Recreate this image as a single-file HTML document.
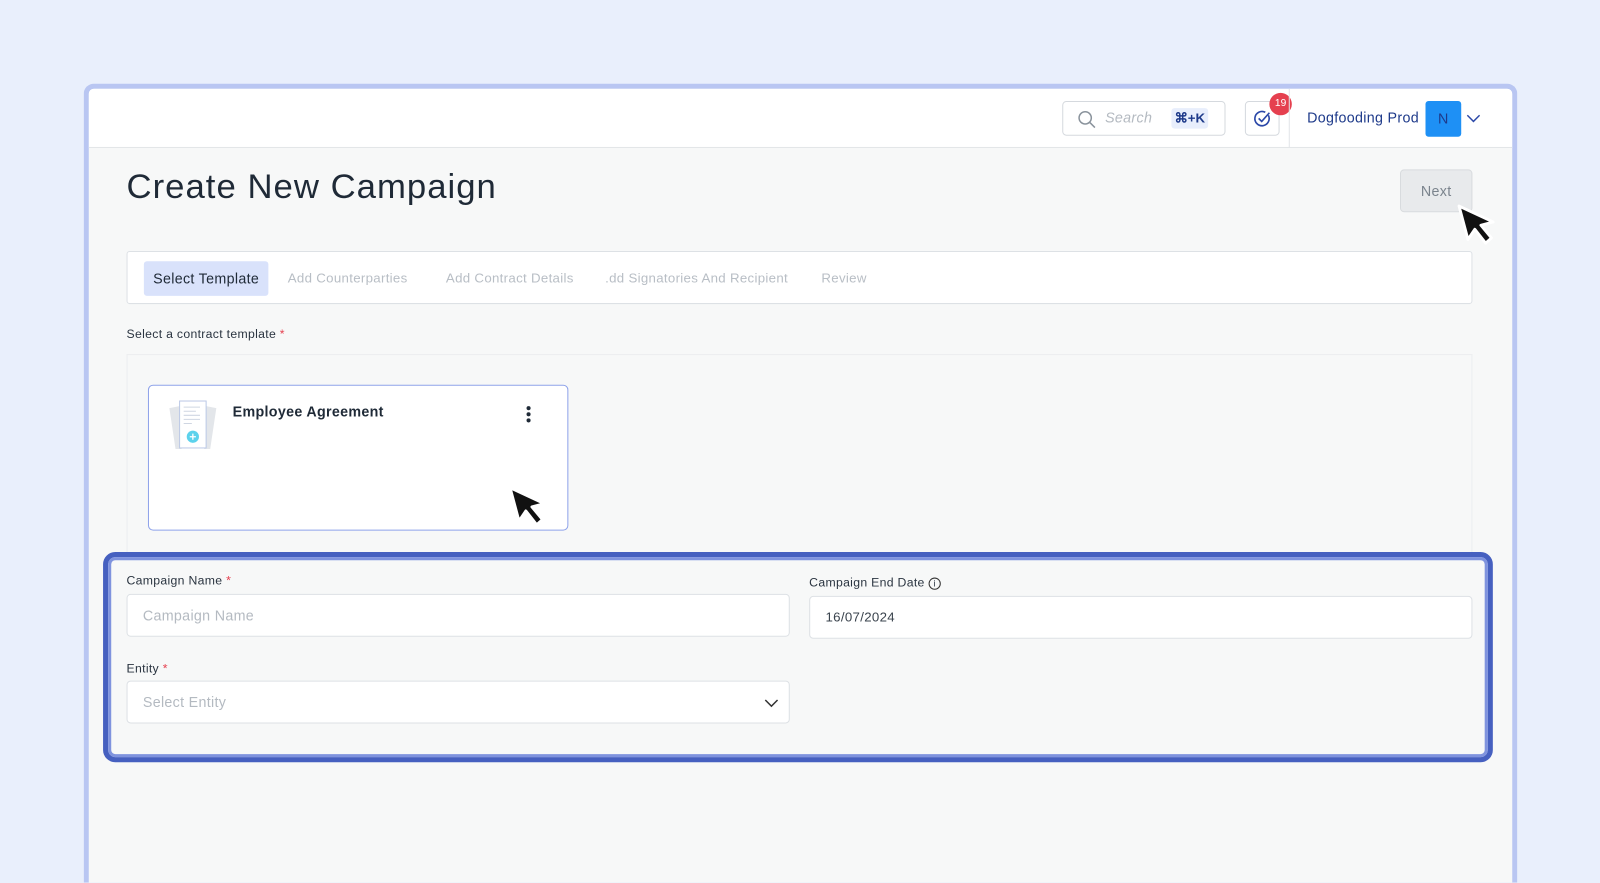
<!DOCTYPE html>
<html style="width:1600px;height:883px;overflow:hidden"><head><meta charset="utf-8"><style>
*{box-sizing:border-box;margin:0;padding:0}
body{width:1600px;height:883px;background:#e9effc;font-family:"Liberation Sans",sans-serif;position:relative;overflow:hidden;color:#1f2a37;letter-spacing:0.3px}
.wrap{position:absolute;left:0;top:0;width:1568px;height:865px;overflow:hidden;transform:scale(1.0204);transform-origin:0 0}
.win{position:absolute;left:82px;top:82px;width:1405px;height:783px;border:5px solid #b9c6f2;border-bottom:none;border-radius:10px 10px 0 0;background:#f7f8f8;overflow:hidden}
.hdr{position:absolute;left:0;top:0;right:0;height:58px;background:#fff;border-bottom:1px solid #e2e5e8}
.abs{position:absolute}
.search{left:954px;top:12px;width:160px;height:34px;border:1.5px solid #d5d9de;border-radius:4px}
.kbd{left:106px;top:6px;width:36px;height:20px;background:#e8eefc;border-radius:3px;color:#1e3a8a;font-size:13px;font-weight:bold;text-align:center;line-height:20px;letter-spacing:0}
.chk{left:1133px;top:12px;width:34px;height:34px;border:1.5px solid #d5d9de;border-radius:4px}
.badge{left:1157px;top:4px;width:22px;height:22px;border-radius:50%;background:#e5404f;color:#fff;font-size:10px;text-align:center;line-height:22px;letter-spacing:0}
.lbl{font-size:12px;color:#2a3440}
.star{color:#e5404f}
.input{background:#fff;border:1px solid #dde1e5;border-radius:4px;font-size:14px;color:#b4bac1;padding-left:15px}
</style></head><body>
<div class="wrap">
<div class="win">
 <div class="hdr">
  <div class="abs search">
   <svg class="abs" style="left:14px;top:8px" width="18" height="18" viewBox="0 0 18 18"><circle cx="7.5" cy="7.5" r="6" fill="none" stroke="#8a939c" stroke-width="1.5"/><path d="M12 12l5 5" stroke="#8a939c" stroke-width="1.5"/></svg>
   <div class="abs" style="left:41px;top:7px;font-size:14px;font-style:italic;color:#b4bac1">Search</div>
   <div class="abs kbd">⌘+K</div>
  </div>
  <div class="abs chk"><svg class="abs" style="left:7px;top:7px" width="18" height="18" viewBox="0 0 18 18"><path d="M15 6A7 7 0 1 1 12 3" fill="none" stroke="#2b48a8" stroke-width="1.6"/><path d="M5.5 9l3 3L16 3.5" fill="none" stroke="#2b48a8" stroke-width="1.6"/></svg></div>
  <div class="abs badge">19</div>
  <div class="abs" style="left:1176px;top:0;width:1px;height:58px;background:#e2e5e8"></div>
  <div class="abs" style="left:1194px;top:20px;font-size:14px;color:#1e3a8a">Dogfooding Prod</div>
  <div class="abs" style="left:1310px;top:12px;width:35px;height:35px;background:#1e90f5;border-radius:3px;color:#1e3a8a;text-align:center;line-height:35px;font-size:14px">N</div>
  <svg class="abs" style="left:1350px;top:24px" width="14" height="10" viewBox="0 0 14 10"><path d="M1 2l6 6 6-6" fill="none" stroke="#2b48a8" stroke-width="1.4"/></svg>
 </div>
 <div class="abs" style="left:37px;top:77px;font-size:34px;color:#1f2a37;letter-spacing:1px">Create New Campaign</div>
 <div class="abs" style="left:1285px;top:79px;width:71px;height:42px;background:#e8eaec;border:1px solid #d8dbde;border-radius:4px;color:#7b848d;font-size:14px;text-align:center;line-height:40px">Next</div>
 <div class="abs" style="left:37px;top:159px;width:1319px;height:52px;background:#fff;border:1px solid #dde1e5;border-radius:3px;font-size:13px;color:#b8bec5">
  <div class="abs" style="left:16px;top:9px;width:122px;height:34px;background:#d9e2fb;border-radius:3px;color:#1f2a37;text-align:center;line-height:34px;font-size:14px">Select Template</div>
  <div class="abs" style="left:157px;top:18px">Add Counterparties</div>
  <div class="abs" style="left:312px;top:18px">Add Contract Details</div>
  <div class="abs" style="left:468px;top:18px">.dd Signatories And Recipient</div>
  <div class="abs" style="left:680px;top:18px">Review</div>
 </div>
 <div class="abs lbl" style="left:37px;top:233px">Select a contract template <span class="star">*</span></div>
 <div class="abs" style="left:37px;top:260px;width:1319px;height:200px;border:1px solid #eceef0;border-bottom:none"></div>
 <div class="abs" style="left:58px;top:290px;width:412px;height:143px;background:#fff;border:1.5px solid #8fa3ea;border-radius:5px">
  <svg class="abs" style="left:18px;top:12px" width="50" height="52" viewBox="0 0 50 52"><path d="M2 10L12 8 14 50 8 50z M48 10L38 8 36 50 42 50z" fill="#e3e6ea"/><rect x="12" y="3" width="26" height="46" fill="#fff" stroke="#bcc9e6"/><path d="M16 9h16M16 13h12M16 17h16M16 21h16M16 25h8" stroke="#cfd6e2"/><circle cx="25" cy="38" r="6" fill="#5cd2ec"/><path d="M25 35v6M22 38h6" stroke="#fff" stroke-width="1.3"/></svg>
  <div class="abs" style="left:82px;top:17px;font-size:14px;font-weight:bold;color:#1f2a37">Employee Agreement</div>
  <div class="abs" style="left:370px;top:20px;width:4px;height:4px;border-radius:50%;background:#1f2a37;box-shadow:0 6px 0 #1f2a37,0 12px 0 #1f2a37"></div>
 </div>
 <div class="abs" style="left:14px;top:454px;width:1362px;height:206px;border:5px solid #4660c0;border-radius:12px;background:#f7f8f8"><div style="position:absolute;inset:0;border:3px solid #7f93de;border-radius:7px"></div></div>
 <div class="abs lbl" style="left:37px;top:475px">Campaign Name <span class="star">*</span></div>
 <div class="abs input" style="left:37px;top:495px;width:650px;height:42px;line-height:40px">Campaign Name</div>
 <div class="abs lbl" style="left:706px;top:477px">Campaign End Date <span style="display:inline-block;width:12px;height:12px;border:1px solid #333;border-radius:50%;font-size:9px;text-align:center;line-height:11px;vertical-align:middle;letter-spacing:0">i</span></div>
 <div class="abs input" style="left:706px;top:497px;width:650px;height:42px;line-height:40px;color:#3a434d;font-size:13px">16/07/2024</div>
 <div class="abs lbl" style="left:37px;top:561px">Entity <span class="star">*</span></div>
 <div class="abs input" style="left:37px;top:580px;width:650px;height:42px;line-height:40px">Select Entity
  <svg class="abs" style="left:624px;top:16px" width="14" height="10" viewBox="0 0 14 10"><path d="M1 2l6 6 6-6" fill="none" stroke="#333" stroke-width="1.5"/></svg></div>
</div>
<svg class="abs" style="left:1428px;top:194px" width="50" height="52" viewBox="0 0 42 46"><path d="M5 3L5 33 13 26 19 40 25 37 19 24 30 24z" transform="rotate(-15 18 22)" fill="#111" stroke="#fff" stroke-width="2.5" stroke-linejoin="round"/></svg>
<svg class="abs" style="left:498px;top:470px" width="50" height="52" viewBox="0 0 42 46"><path d="M5 3L5 33 13 26 19 40 25 37 19 24 30 24z" transform="rotate(-15 18 22)" fill="#111" stroke="#fff" stroke-width="2.5" stroke-linejoin="round"/></svg>
</div>
</body></html>
